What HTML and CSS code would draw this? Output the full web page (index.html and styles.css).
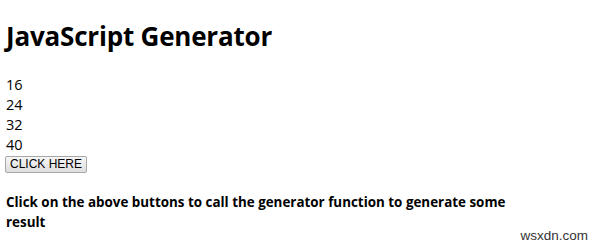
FILE: index.html
```html
<!DOCTYPE html>
<html>
<head>
<meta charset="utf-8">
<link rel="stylesheet" href="styles.css">
</head>
<body>
<h1 class="title">JavaScript Generator</h1>
<div class="results">
  <div class="num">16</div>
  <div class="num">24</div>
  <div class="num">32</div>
  <div class="num">40</div>
</div>
<button class="btn">CLICK HERE</button>
<h3 class="note">Click on the above buttons to call the generator function to generate some result</h3>
<div class="watermark">wsxdn.com</div>
</body>
</html>
```
FILE: styles.css
```css
html, body {
  margin: 0;
  padding: 0;
  background: #fff;
}
body {
  padding: 0 6px;
  font-family: "Open Sans", "Noto Sans", sans-serif;
  font-size: 14.5px;
  line-height: 20px;
  color: #000;
  position: relative;
  height: 249px;
  box-sizing: border-box;
}
.title {
  margin: 0;
  padding-top: 18px;
  font-size: 26px;
  line-height: 36px;
  font-weight: 700;
  letter-spacing: -0.2px;
}
.results {
  margin-top: 21px;
}
.btn {
  display: block;
  box-sizing: border-box;
  margin: 1px 0 0 -1px;
  padding: 0;
  height: 17px;
  width: 82px;
  white-space: nowrap;
  text-align: center;
  font-family: "Liberation Sans", Arial, sans-serif;
  font-size: 12px;
  line-height: 15px;
  background: linear-gradient(#f6f6f6, #dedede);
  border: 1px solid #a8a8a8;
  border-radius: 2px;
  color: #000;
}
.note {
  margin: 19px 0 0;
  font-size: 13.4px;
  line-height: 20px;
  font-weight: 700;
  width: 505px;
}
.watermark {
  position: absolute;
  right: 12px;
  bottom: 3px;
  font-family: "Liberation Sans", Arial, sans-serif;
  font-size: 13.5px;
  color: #333;
}
```
